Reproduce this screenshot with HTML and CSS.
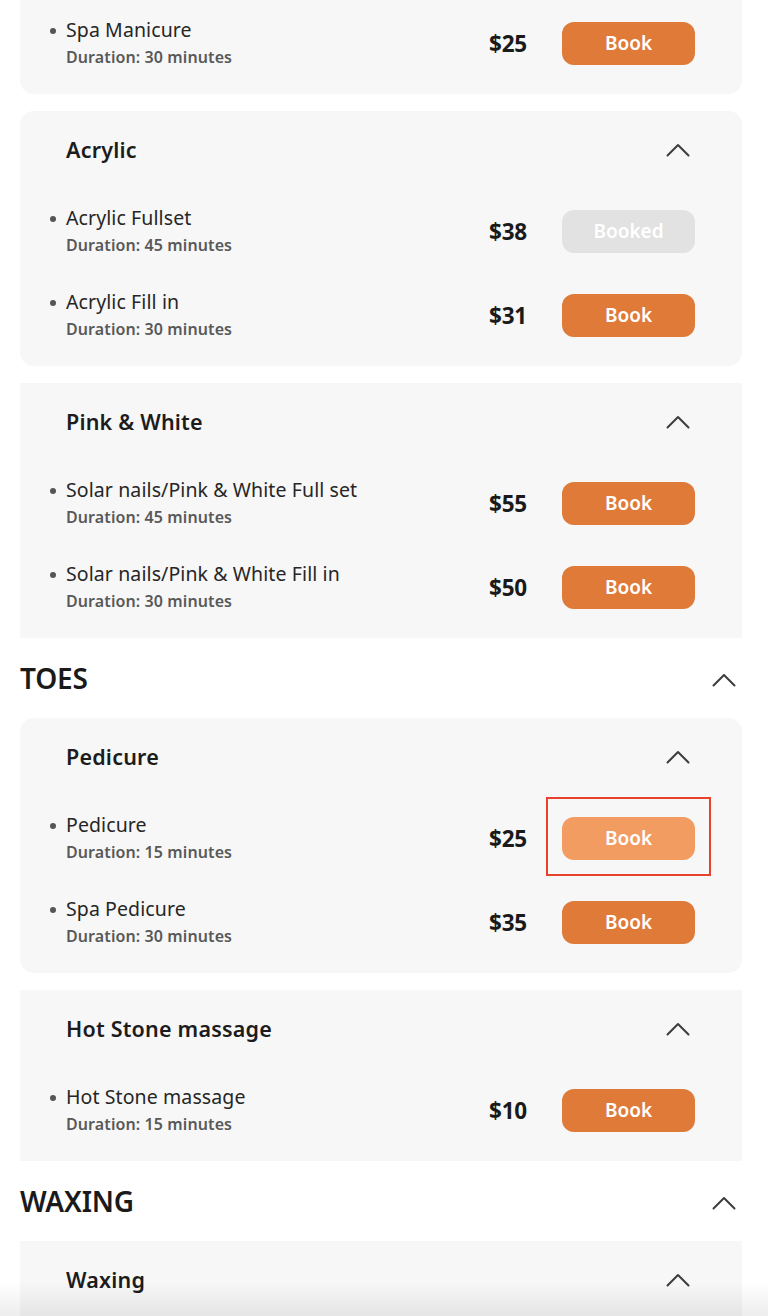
FILE: index.html
```html
<!DOCTYPE html>
<html lang="en">
<head>
<meta charset="utf-8">
<title>Services</title>
<link rel="stylesheet" href="styles.css">
</head>
<body>
<main class="page">
  <section class="section">
    <div class="card first">
      <div class="row">
        <div class="info"><div class="name">Spa Manicure</div><div class="dur">Duration: 30 minutes</div></div>
        <div class="price">$25</div>
        <button class="btn">Book</button>
      </div>
    </div>

    <div class="card">
      <div class="card-head"><h3>Acrylic</h3><svg class="chev" viewBox="0 0 24 14"><path d="M1.5 12.5 L12 2 L22.5 12.5"/></svg></div>
      <div class="rows">
        <div class="row">
          <div class="info"><div class="name">Acrylic Fullset</div><div class="dur">Duration: 45 minutes</div></div>
          <div class="price">$38</div>
          <button class="btn booked">Booked</button>
        </div>
        <div class="row">
          <div class="info"><div class="name">Acrylic Fill in</div><div class="dur">Duration: 30 minutes</div></div>
          <div class="price">$31</div>
          <button class="btn">Book</button>
        </div>
      </div>
    </div>

    <div class="card square">
      <div class="card-head"><h3>Pink &amp; White</h3><svg class="chev" viewBox="0 0 24 14"><path d="M1.5 12.5 L12 2 L22.5 12.5"/></svg></div>
      <div class="rows">
        <div class="row">
          <div class="info"><div class="name">Solar nails/Pink &amp; White Full set</div><div class="dur">Duration: 45 minutes</div></div>
          <div class="price">$55</div>
          <button class="btn">Book</button>
        </div>
        <div class="row">
          <div class="info"><div class="name">Solar nails/Pink &amp; White Fill in</div><div class="dur">Duration: 30 minutes</div></div>
          <div class="price">$50</div>
          <button class="btn">Book</button>
        </div>
      </div>
    </div>
  </section>

  <section class="section">
    <div class="section-head"><h2>TOES</h2><svg class="chev" viewBox="0 0 24 14"><path d="M1.5 12.5 L12 2 L22.5 12.5"/></svg></div>
    <div class="card">
      <div class="card-head"><h3>Pedicure</h3><svg class="chev" viewBox="0 0 24 14"><path d="M1.5 12.5 L12 2 L22.5 12.5"/></svg></div>
      <div class="rows">
        <div class="row">
          <div class="info"><div class="name">Pedicure</div><div class="dur">Duration: 15 minutes</div></div>
          <div class="price">$25</div>
          <span class="highlight"><button class="btn hover">Book</button></span>
        </div>
        <div class="row">
          <div class="info"><div class="name">Spa Pedicure</div><div class="dur">Duration: 30 minutes</div></div>
          <div class="price">$35</div>
          <button class="btn">Book</button>
        </div>
      </div>
    </div>

    <div class="card square">
      <div class="card-head"><h3>Hot Stone massage</h3><svg class="chev" viewBox="0 0 24 14"><path d="M1.5 12.5 L12 2 L22.5 12.5"/></svg></div>
      <div class="rows">
        <div class="row">
          <div class="info"><div class="name">Hot Stone massage</div><div class="dur">Duration: 15 minutes</div></div>
          <div class="price">$10</div>
          <button class="btn">Book</button>
        </div>
      </div>
    </div>
  </section>

  <section class="section">
    <div class="section-head"><h2>WAXING</h2><svg class="chev" viewBox="0 0 24 14"><path d="M1.5 12.5 L12 2 L22.5 12.5"/></svg></div>
    <div class="card square last">
      <div class="card-head"><h3>Waxing</h3><svg class="chev" viewBox="0 0 24 14"><path d="M1.5 12.5 L12 2 L22.5 12.5"/></svg></div>
    </div>
  </section>
</main>
<div class="bottom-fade"></div>
</body>
</html>
```

FILE: styles.css
```css
* { box-sizing: border-box; }

html, body {
  margin: 0;
  padding: 0;
  background: #ffffff;
  overflow: hidden;
}

body {
  font-family: "Noto Sans", "Liberation Sans", sans-serif;
  color: #1c1c1c;
  height: 1316px;
}

.page {
  padding: 0 26px 0 20px;
}

.section {
  display: flex;
  flex-direction: column;
  gap: 17px;
}

.section-head {
  height: 80px;
  display: flex;
  align-items: center;
  justify-content: space-between;
  padding-right: 6px;
  margin: 0 0 -17px;
}

.section-head h2 {
  margin: 0;
  font-size: 28px;
  line-height: 32px;
  font-weight: 600;
  letter-spacing: -0.2px;
  color: #1a1a1a;
}

.section-head .chev { margin-top: 3px; }

.chev {
  width: 24px;
  height: 14px;
  fill: none;
  stroke: #3d3d3d;
  stroke-width: 2;
  stroke-linecap: round;
  stroke-linejoin: round;
}

.card {
  background: #f7f7f7;
  border-radius: 14px;
  padding: 26px 47px 25px 30px;
}

.card.square { border-radius: 0; }

.card.first {
  margin-top: -77px;
  padding-top: 94px;
}

.card.last { height: 140px; }

.card-head {
  height: 26px;
  display: flex;
  align-items: center;
  justify-content: space-between;
  padding-left: 16px;
  padding-right: 5px;
  margin-bottom: 42px;
}

.card-head h3 {
  margin: 0;
  font-size: 21.5px;
  line-height: 26px;
  font-weight: 600;
  color: #1c1c1c;
  letter-spacing: 0.2px;
}

.rows {
  display: flex;
  flex-direction: column;
  gap: 32px;
}

.row {
  display: flex;
  align-items: center;
  height: 52px;
}

.info {
  flex: 1;
  padding-left: 16px;
  position: relative;
}

.info::before {
  content: "";
  position: absolute;
  left: 0;
  top: 11px;
  width: 6px;
  height: 6px;
  border-radius: 50%;
  background: #555;
}

.name {
  font-size: 19.5px;
  line-height: 26px;
  color: #262626;
  font-weight: 400;
  letter-spacing: 0.1px;
}

.dur {
  font-size: 16px;
  line-height: 24px;
  margin-top: 2px;
  font-weight: 600;
  color: #595959;
  letter-spacing: 0.1px;
}

.price {
  font-size: 22.5px;
  font-weight: 700;
  color: #1a1a1a;
  margin-right: 35px;
  letter-spacing: -0.2px;
}

.btn {
  width: 133px;
  height: 43px;
  border: none;
  border-radius: 12px;
  background: #e07a39;
  color: #ffffff;
  font-family: inherit;
  font-size: 19px;
  font-weight: 600;
  padding: 0;
  letter-spacing: 0;
}

.btn.booked { background: #e2e2e2; }
.btn.hover { background: #f29c61; }

.highlight {
  position: relative;
  display: block;
}

.highlight::after {
  content: "";
  position: absolute;
  left: -16px;
  right: -16px;
  top: -20px;
  bottom: -16px;
  border: 2px solid #e8412c;
}

.highlight .btn { display: block; }

.bottom-fade {
  position: fixed;
  left: 0;
  right: 0;
  bottom: 0;
  height: 34px;
  background: linear-gradient(to bottom, rgba(0,0,0,0), rgba(0,0,0,0.07));
  pointer-events: none;
}
```
